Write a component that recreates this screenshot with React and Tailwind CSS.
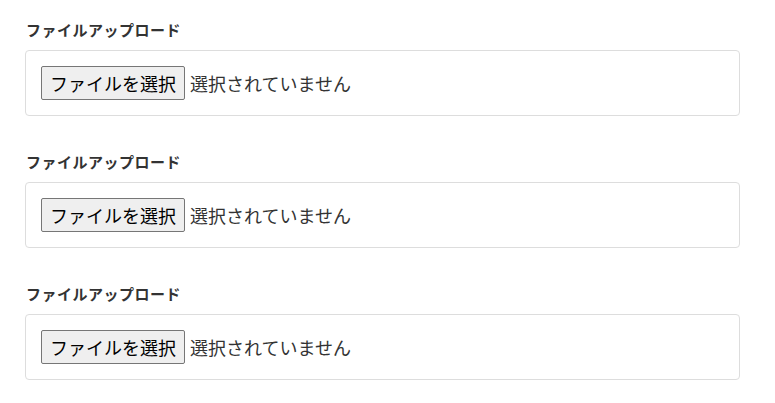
import React from 'react';

const FONT = "font-['Noto_Sans_CJK_JP','Noto_Sans',sans-serif]";

const UploadField = ({ label }) => (
    <div className="mb-[36px]">
        <div className="text-[15px] leading-[20px] font-bold tracking-[0.5px] text-[#333] mb-[10px] pl-[1px]">{label}</div>
        <div className="border border-[#ddd] rounded-[4px] p-[15px] flex items-center">
            <button
                type="button"
                className="h-[34px] px-[8px] bg-[#efefef] border border-[#767676] rounded-[2px] text-[18px] leading-none text-black"
            >
                ファイルを選択
            </button>
            <span className="ml-[5px] text-[18px] leading-none text-[#333]">選択されていません</span>
        </div>
    </div>
);

export default function App() {
    return (
        <div className={`w-[775px] h-[403px] bg-white pl-[25px] pr-[35px] pt-[20px] ${FONT}`}>
            <UploadField label="ファイルアップロード" />
            <UploadField label="ファイルアップロード" />
            <UploadField label="ファイルアップロード" />
        </div>
    );
}
